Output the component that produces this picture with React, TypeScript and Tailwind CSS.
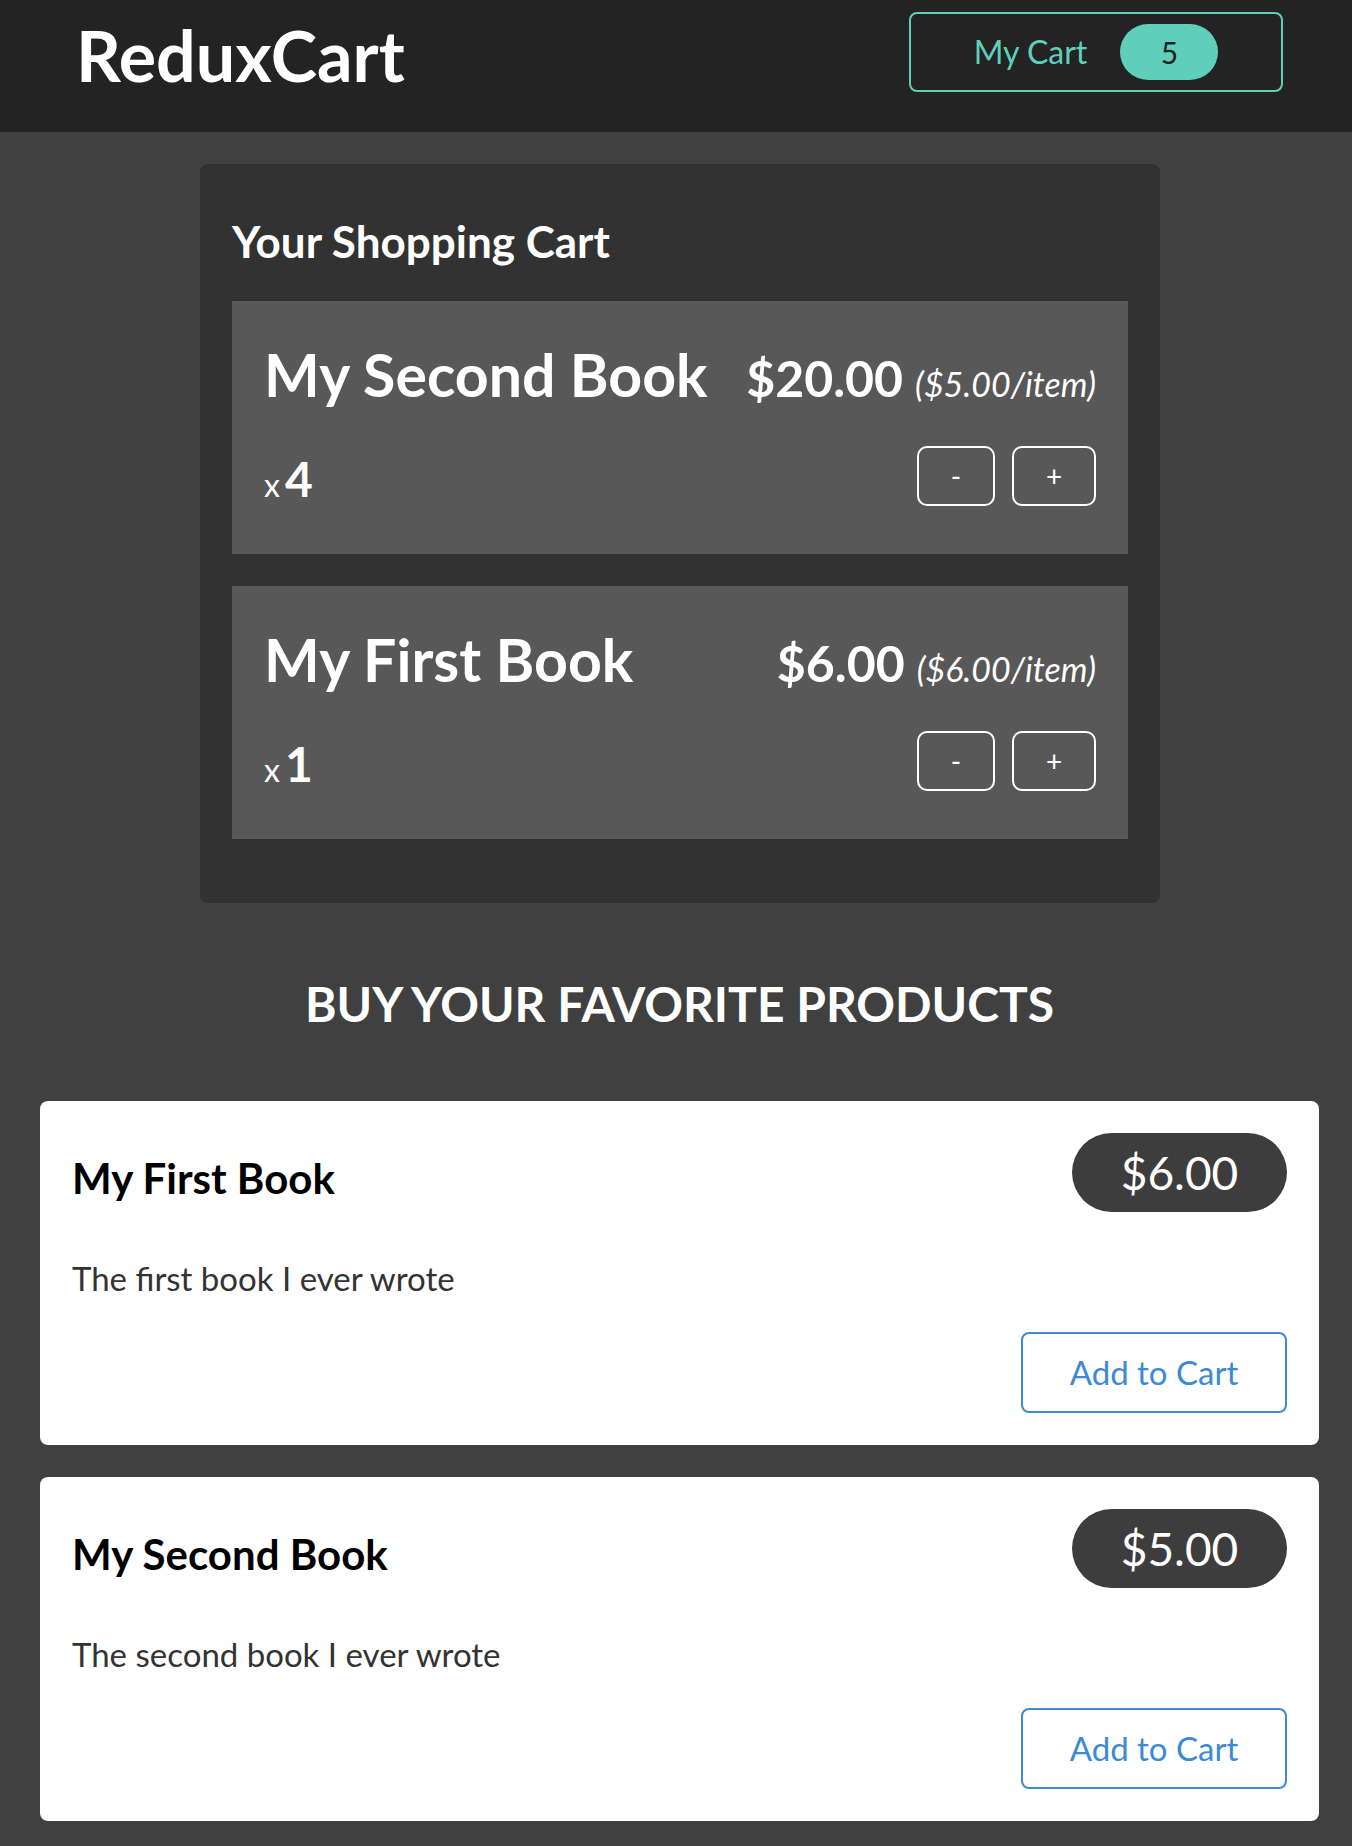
import React, { useState } from 'react';

type Product = { id: number; title: string; price: number; description: string };

const PRODUCTS: Product[] = [
  { id: 1, title: 'My First Book', price: 6, description: 'The first book I ever wrote' },
  { id: 2, title: 'My Second Book', price: 5, description: 'The second book I ever wrote' },
];

const App: React.FC = () => {
  const [items, setItems] = useState([
    { id: 2, title: 'My Second Book', price: 5, quantity: 4 },
    { id: 1, title: 'My First Book', price: 6, quantity: 1 },
  ]);

  const total = items.reduce((sum, i) => sum + i.quantity, 0);

  const change = (id: number, delta: number) => {
    setItems(prev =>
      prev
        .map(i => (i.id === id ? { ...i, quantity: i.quantity + delta } : i))
        .filter(i => i.quantity > 0)
    );
  };

  const add = (p: Product) => {
    setItems(prev => {
      const found = prev.find(i => i.id === p.id);
      if (found) return prev.map(i => (i.id === p.id ? { ...i, quantity: i.quantity + 1 } : i));
      return [...prev, { id: p.id, title: p.title, price: p.price, quantity: 1 }];
    });
  };

  return (
    <div className="min-h-[1846px] bg-[#404040] font-['Lato',sans-serif]">
      <header className="h-[132px] bg-[#232323] flex justify-between items-start pl-[76px] pr-[69px]">
        <h1 className="mt-[21px] text-[70px] leading-[68px] font-bold text-white">ReduxCart</h1>
        <button className="mt-[12px] w-[374px] h-[80px] flex items-center justify-center gap-[33px] border-2 border-[#5fcfb9] rounded-[8px] text-[#5fcfb9]">
          <span className="text-[32px] leading-[40px]">My Cart</span>
          <span className="w-[98px] h-[56px] rounded-full bg-[#5fcfb9] text-[#222] text-[30px] leading-[56px] flex items-center justify-center">
            {total}
          </span>
        </button>
      </header>

      <main>
        <section className="mt-[32px] ml-[200px] w-[960px] bg-[#323232] rounded-[8px] px-[32px] pt-[32px] pb-[32px]">
          <h2 className="mt-[20px] mb-[35px] text-[44px] leading-[50px] font-bold text-white">Your Shopping Cart</h2>
          <ul>
            {items.map(item => (
              <li key={item.id} className="mb-[32px] bg-[#585858] px-[32px] pt-[40px] pb-[48px] text-white">
                <div className="h-[68px] flex justify-between items-baseline">
                  <h3 className="text-[59px] leading-[68px] font-bold">{item.title}</h3>
                  <div className="flex items-baseline gap-[12px]">
                    <span className="text-[50px] leading-none font-bold">${(item.price * item.quantity).toFixed(2)}</span>
                    <span className="text-[34px] leading-none italic">(${item.price.toFixed(2)}/item)</span>
                  </div>
                </div>
                <div className="mt-[37px] h-[60px] flex justify-between items-end">
                  <div className="mb-[3px] flex items-baseline gap-[5px]">
                    <span className="text-[32px] leading-none">x</span>
                    <span className="text-[48px] leading-none font-bold">{item.quantity}</span>
                  </div>
                  <div className="flex gap-[17px]">
                    <button
                      onClick={() => change(item.id, -1)}
                      className="w-[78px] h-[60px] border-2 border-white rounded-[10px] text-[28px] text-white"
                    >
                      -
                    </button>
                    <button
                      onClick={() => change(item.id, 1)}
                      className="w-[84px] h-[60px] border-2 border-white rounded-[10px] text-[28px] text-white"
                    >
                      +
                    </button>
                  </div>
                </div>
              </li>
            ))}
          </ul>
        </section>

        <section className="ml-[40px] mr-[33px]">
          <h2 className="mt-[71px] mb-[67px] text-center text-[48px] leading-[60px] font-bold text-white uppercase">
            Buy your favorite products
          </h2>
          <ul>
            {PRODUCTS.map(p => (
              <li key={p.id} className="mb-[32px] bg-white rounded-[8px] p-[32px]">
                <header className="flex justify-between items-center">
                  <h3 className="mt-[10px] text-[42px] leading-[50px] font-bold text-black">{p.title}</h3>
                  <div className="w-[215px] h-[79px] rounded-full bg-[#3d3d3d] text-white text-[46px] flex items-center justify-center">
                    ${p.price.toFixed(2)}
                  </div>
                </header>
                <p className="mt-[46px] text-[33px] leading-[40px] text-[#333]">{p.description}</p>
                <div className="mt-[34px] flex justify-end">
                  <button
                    onClick={() => add(p)}
                    className="w-[266px] h-[81px] border-2 border-[#3d8ad4] rounded-[8px] text-[#3d8ad4] text-[33px]"
                  >
                    Add to Cart
                  </button>
                </div>
              </li>
            ))}
          </ul>
        </section>
      </main>
    </div>
  );
};

export default App;
